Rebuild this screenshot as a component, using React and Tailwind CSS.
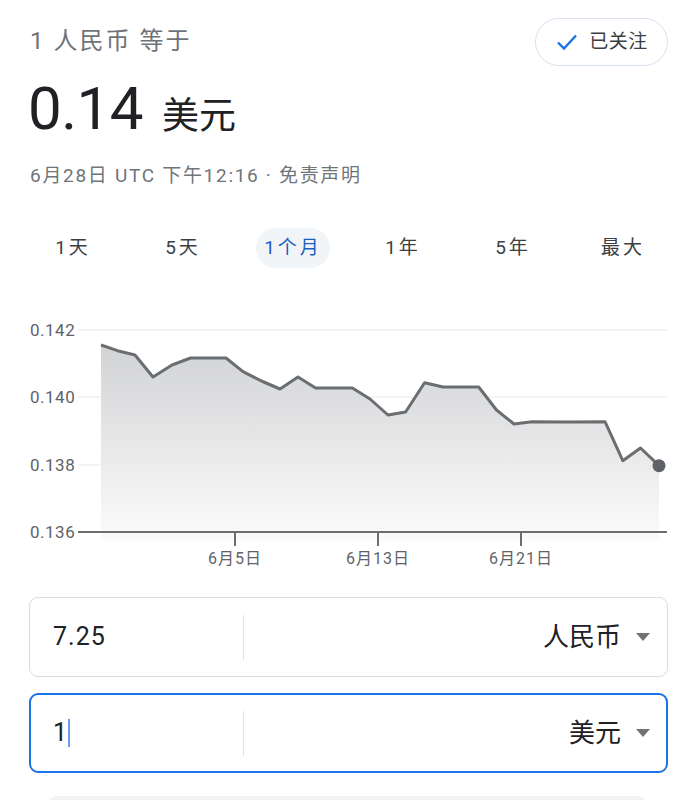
import React from "react";

const pts = [
  [101, 345], [117.5, 350.7], [135, 355], [153, 377], [172, 365], [190.6, 358], [226, 358],
  [243, 371.7], [261.5, 381], [280, 389], [298, 377], [315.6, 388], [352.4, 388], [370, 399],
  [388, 415], [405.6, 412], [424.6, 382.7], [443, 387], [478.7, 387], [496.5, 410], [514, 424],
  [532, 421.7], [567, 422], [605, 421.7], [622.8, 460.7], [640.5, 448], [659, 465.7],
];

function Chart() {
  const top = 300;
  const p = pts.map(([x, y]) => [x, y - top]);
  const line = p.map(([x, y], i) => `${i ? "L" : "M"}${x} ${y}`).join(" ");
  const area = `${line} L659 241 L101 241 Z`;
  const grid = [330, 397, 465].map((y) => y - top);
  const labels = [
    ["0.142", 330],
    ["0.140", 397],
    ["0.138", 465],
    ["0.136", 532],
  ];
  const ticks = [
    [235, "6月5日"],
    [378, "6月13日"],
    [521, "6月21日"],
  ];
  return (
    <svg width="695" height="280" viewBox="0 0 695 280" className="block">
      <defs>
        <linearGradient id="g" x1="0" y1="0" x2="0" y2="1">
          <stop offset="0" stopColor="#d2d3d5" />
          <stop offset="1" stopColor="#fbfbfb" />
        </linearGradient>
      </defs>
      {grid.map((y) => (
        <line key={y} x1="78" x2="667" y1={y} y2={y} stroke="#f1f1f1" strokeWidth="1.5" />
      ))}
      <path d={area} fill="url(#g)" />
      <path d={line} fill="none" stroke="#6b6e71" strokeWidth="3" strokeLinejoin="round" />
      <circle cx="659" cy={465.7 - top} r="6.5" fill="#5f6368" />
      <line x1="78" x2="667" y1={232} y2={232} stroke="#6b6e71" strokeWidth="2" />
      {ticks.map(([x, t]) => (
        <g key={t}>
          <line x1={x} x2={x} y1="232" y2="246" stroke="#6b6e71" strokeWidth="2" />
          <text
            x={x}
            y="264"
            textAnchor="middle"
            fontSize="16"
            letterSpacing="1"
            fill="#5f6368"
            fontFamily="Roboto, 'Noto Sans CJK SC', sans-serif"
          >
            {t}
          </text>
        </g>
      ))}
      {labels.map(([t, y]) => (
        <text
          key={t}
          x="30"
          y={y - top + 6}
          fontSize="17"
          letterSpacing="0.5"
          fill="#5f6368"
          fontFamily="Roboto, 'Noto Sans CJK SC', sans-serif"
        >
          {t}
        </text>
      ))}
    </svg>
  );
}

const tabs = ["1天", "5天", "1个月", "1年", "5年", "最大"];

export default function App() {
  return (
    <div className="w-[695px] h-[800px] overflow-hidden bg-white font-['Roboto','Noto_Sans_CJK_SC',sans-serif]">
      <div className="flex justify-between pl-[30px] pr-[27px] pt-[18px]">
        <div className="mt-[9px] text-[24px] leading-[28px] text-[#6f7378] tracking-[2px]">1 人民币 等于</div>
        <button className="h-[48px] w-[133px] rounded-full border border-[#d7e2ee] flex items-center justify-center gap-[10px] bg-white">
          <svg width="24" height="24" viewBox="0 0 24 24">
            <path d="M3 12.5 L9 18.5 L21 5.5" fill="none" stroke="#1a73e8" strokeWidth="2.4" />
          </svg>
          <span className="text-[19px] leading-[24px] text-[#3c4043] tracking-[0.5px]">已关注</span>
        </button>
      </div>
      <div className="pl-[28px] mt-[8px] flex items-baseline h-[70px]">
        <span className="text-[60px] leading-[70px] text-[#202124] tracking-[-0.5px]">0.14</span>
        <span className="ml-[19px] text-[37px] leading-[40px] text-[#202124]">美元</span>
      </div>
      <div className="pl-[30px] mt-[20px] text-[19px] leading-[24px] text-[#70757a] tracking-[1.7px]">
        6月28日 UTC 下午12:16 · 免责声明
      </div>
      <div className="mt-[40px] ml-[18px] w-[660px] grid grid-cols-6">
        {tabs.map((t, i) => (
          <div key={t} className="flex justify-center">
            <div
              className={
                i === 2
                  ? "h-[40px] px-[8px] rounded-full bg-[#f1f5f8] flex items-center text-[19px] text-[#1a5fc0] tracking-[3px]"
                  : "h-[40px] px-[8px] flex items-center text-[19px] text-[#3c4043] tracking-[3px]"
              }
            >
              {t}
            </div>
          </div>
        ))}
      </div>
      <div className="mt-[32px]">
        <Chart />
      </div>
      <div className="mt-[17px] ml-[29px] mr-[27px] flex flex-col gap-[16px]">
        <div className="h-[80px] rounded-[9px] border border-[#dadce0] flex items-center">
          <div className="w-[213px] pl-[23px] text-[25px] text-[#202124] tracking-[1px]">7.25</div>
          <div className="w-px h-[45px] bg-[#e3e3e3]" />
          <div className="flex-1 flex justify-end items-center pr-[16px] gap-[14px]">
            <span className="text-[26px] text-[#202124]">人民币</span>
            <svg width="16" height="8" viewBox="0 0 16 8">
              <path d="M1 0 L15 0 L8 8 Z" fill="#737373" />
            </svg>
          </div>
        </div>
        <div className="h-[80px] rounded-[9px] border-2 border-[#1a73e8] flex items-center">
          <div className="w-[212px] pl-[22px] text-[25px] text-[#202124] flex items-center">
            <span>1</span>
            <span className="w-[2px] h-[28px] bg-[#6d9eeb] ml-[1px]" />
          </div>
          <div className="w-px h-[45px] bg-[#e3e3e3]" />
          <div className="flex-1 flex justify-end items-center pr-[15px] gap-[14px]">
            <span className="text-[26px] text-[#202124]">美元</span>
            <svg width="16" height="8" viewBox="0 0 16 8">
              <path d="M1 0 L15 0 L8 8 Z" fill="#737373" />
            </svg>
          </div>
        </div>
      </div>
      <div className="mt-[23px] mx-[46px] h-[60px] rounded-[12px] bg-[#f1f3f4]" />
    </div>
  );
}
